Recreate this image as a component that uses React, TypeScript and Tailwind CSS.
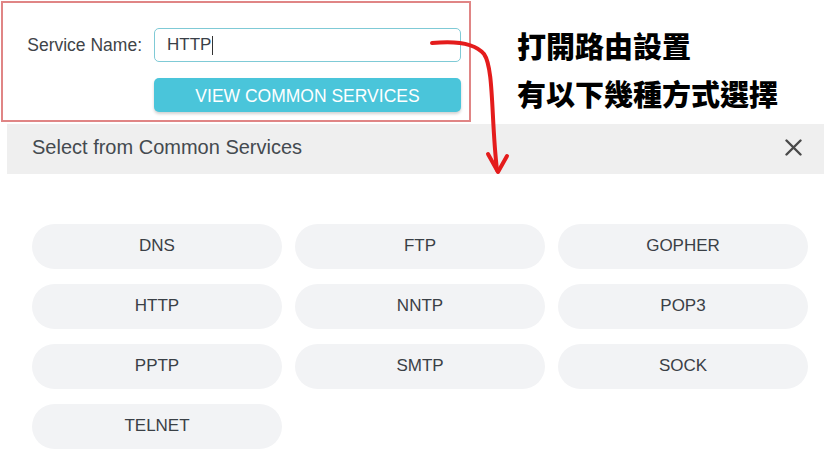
import React from "react";

const services = ["DNS", "FTP", "GOPHER", "HTTP", "NNTP", "POP3", "PPTP", "SMTP", "SOCK", "TELNET"];

export default function App() {
  return (
    <div className="relative w-[824px] h-[454px] overflow-hidden bg-white" style={{ fontFamily: '"Liberation Sans", Arial, sans-serif' }}>
      <div className="flex">
        <div className="ml-[1px] mt-[1px] w-[470px] h-[121px] border-2 border-[#e08585] pt-[25px]">
          <div className="flex items-center">
            <div className="w-[139px] text-right text-[17.5px] text-[#3f4448]">Service Name:</div>
            <div className="ml-[12px] w-[307px] h-[34px] rounded-[5px] border border-[#7fcad6] flex items-center pl-[12px] text-[17px] text-[#3a4048]">
              <span>HTTP</span>
              <span className="inline-block w-px h-[19px] bg-[#333] ml-px" />
            </div>
          </div>
          <button className="mt-[16px] ml-[151px] w-[307px] h-[34px] rounded-[5px] bg-[#4ac5da] text-white text-[17.5px] pt-[3px] shadow-[0_2px_3px_rgba(0,0,0,0.18)] flex items-center justify-center">
            VIEW COMMON SERVICES
          </button>
        </div>
        <div
          className="ml-[46px] pt-[21px] text-[29px] leading-[48px] font-black text-black"
          style={{ fontFamily: '"Noto Sans CJK TC", "Noto Sans CJK SC", sans-serif' }}
        >
          <div>打開路由設置</div>
          <div>有以下幾種方式選擇</div>
        </div>
      </div>

      <div className="mt-[2px] ml-[7px] h-[50px] bg-[#efefef] flex items-center justify-between pl-[25px] pr-[22px]">
        <span className="text-[20px] text-[#444a4f] pb-[5px]">Select from Common Services</span>
        <svg width="17" height="17" viewBox="0 0 17 17" className="block mb-[4px]">
          <path d="M1.5 1.5 L15.5 15.5 M15.5 1.5 L1.5 15.5" stroke="#4a4a4a" strokeWidth="2.4" strokeLinecap="round" />
        </svg>
      </div>

      <div className="mt-[50px] ml-[32px] grid grid-cols-[250px_250px_250px] gap-x-[13px] gap-y-[15px]">
        {services.map((s) => (
          <div key={s} className="h-[45px] rounded-full bg-[#f2f3f5] flex items-center justify-center text-[17px] text-[#3a4046] pb-[2px]">
            {s}
          </div>
        ))}
      </div>

      <svg className="absolute left-0 top-0 pointer-events-none" width="824" height="454" viewBox="0 0 824 454">
        <path
          d="M432 43 C 452 41, 474 42, 484 54 C 494 68, 491 120, 497 170"
          fill="none"
          stroke="#e41c1c"
          strokeWidth="4"
          strokeLinecap="round"
        />
        <path d="M488 154 L 498 172 L 507 156" fill="none" stroke="#e41c1c" strokeWidth="4" strokeLinecap="round" strokeLinejoin="round" />
      </svg>
    </div>
  );
}
